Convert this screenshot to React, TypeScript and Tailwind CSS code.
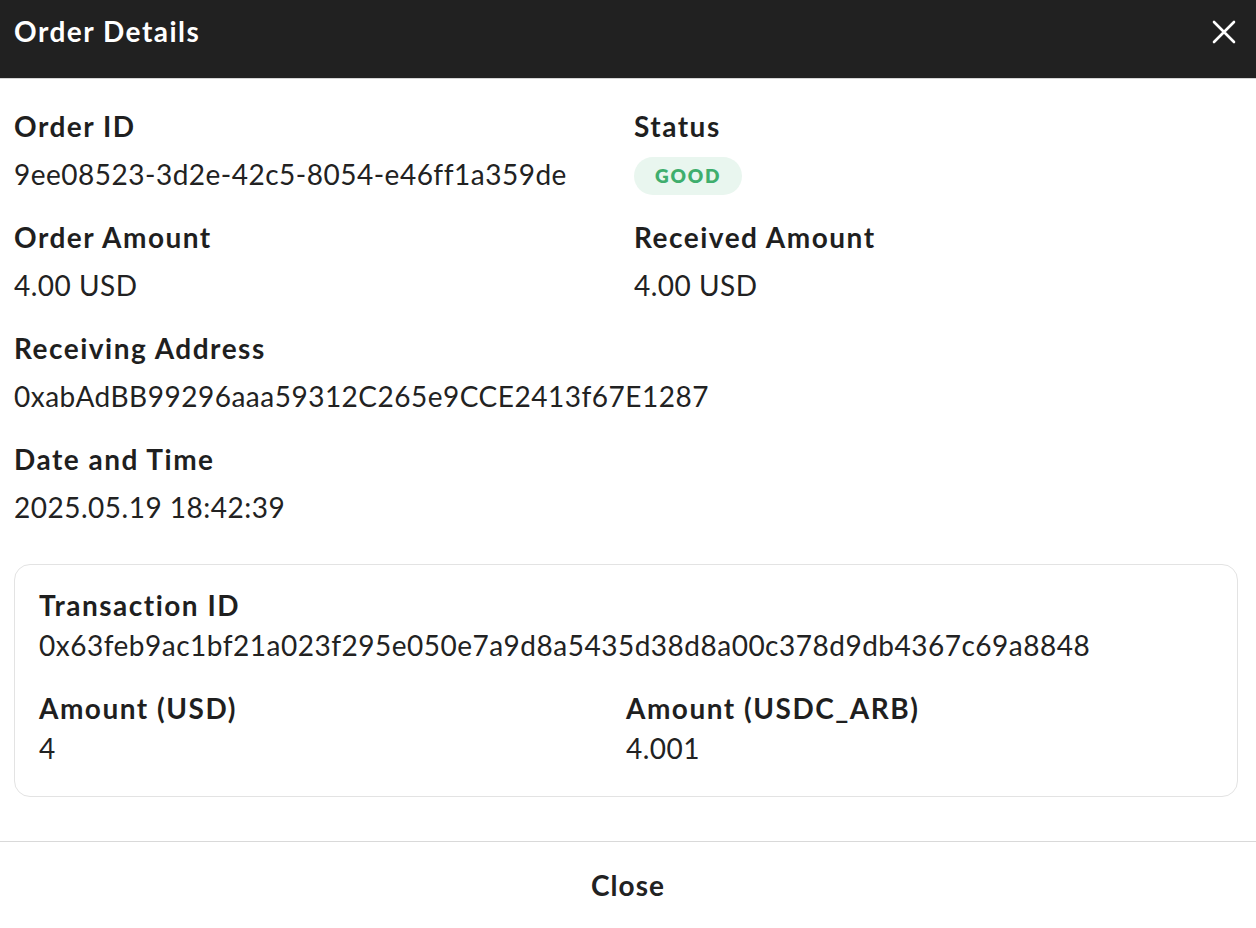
const fields = [
  { label: 'Order ID', value: '9ee08523-3d2e-42c5-8054-e46ff1a359de' },
  { label: 'Status', badge: 'GOOD' },
  { label: 'Order Amount', value: '4.00 USD' },
  { label: 'Received Amount', value: '4.00 USD' },
  { label: 'Receiving Address', value: '0xabAdBB99296aaa59312C265e9CCE2413f67E1287', wide: true },
  { label: 'Date and Time', value: '2025.05.19 18:42:39', wide: true },
]

type Field = { label: string; value?: string; badge?: string; wide?: boolean }

const labelCls = 'text-[28px] leading-[36px] font-bold tracking-[1.5px] text-[#1f1f1f]'
const valueCls = 'text-[28px] leading-[36px] tracking-[0.5px] text-[#222]'

function Item({ label, value, badge, wide }: Field) {
  return (
    <div className={wide ? 'col-span-2' : ''}>
      <div className={labelCls}>{label}</div>
      {badge ? (
        <div className="mt-[12px] flex h-[36px] items-start">
          <span className="mt-[1px] flex h-[38px] items-center rounded-full bg-[#e9f6ef] px-[21px] text-[19px] font-extrabold tracking-[1.8px] text-[#3fae6d]">
            {badge}
          </span>
        </div>
      ) : (
        <div className={`mt-[12px] ${valueCls}`}>{value}</div>
      )}
    </div>
  )
}

export default function App() {
  return (
    <div className="flex h-[928px] w-[1256px] flex-col bg-white font-['Lato',sans-serif]">
      {/* header */}
      <div className="flex h-[79px] items-start justify-between border-b border-[#d4d4d4] bg-[#212121] pt-[13px] pr-[20px] pl-[14px]">
        <p className="text-[28px] leading-[36px] font-bold tracking-[1.5px] text-white">Order Details</p>
        <button className="mt-[7px] text-white">
          <svg width="24" height="24" viewBox="0 0 24 24" fill="none" stroke="currentColor" strokeWidth="2.6" strokeLinecap="round">
            <path d="M2 2 22 22M22 2 2 22" />
          </svg>
        </button>
      </div>

      {/* body */}
      <div className="flex-1 pt-[29px] pr-[18px] pl-[14px]">
        <div className="grid grid-cols-2 gap-x-[16px] gap-y-[27px]">
          {fields.map((f: Field) => (
            <Item key={f.label} {...f} />
          ))}
        </div>

        {/* transaction card */}
        <div className="mt-[39px] rounded-[16px] border border-[#e3e3e3] px-[24px] pt-[22px] pb-[30px]">
          <div className={labelCls}>Transaction ID</div>
          <div className={`mt-[4px] ${valueCls}`}>
            0x63feb9ac1bf21a023f295e050e7a9d8a5435d38d8a00c378d9db4367c69a8848
          </div>
          <div className="mt-[27px] grid grid-cols-2">
            <div>
              <div className={labelCls}>Amount (USD)</div>
              <div className={`mt-[4px] ${valueCls}`}>4</div>
            </div>
            <div>
              <div className={labelCls}>Amount (USDC_ARB)</div>
              <div className={`mt-[4px] ${valueCls}`}>4.001</div>
            </div>
          </div>
        </div>
      </div>

      {/* footer */}
      <div className="flex h-[87px] items-center justify-center border-t border-[#d9d9d9]">
        <button className="text-[28px] font-bold tracking-[1px] text-[#222]">Close</button>
      </div>
    </div>
  )
}
